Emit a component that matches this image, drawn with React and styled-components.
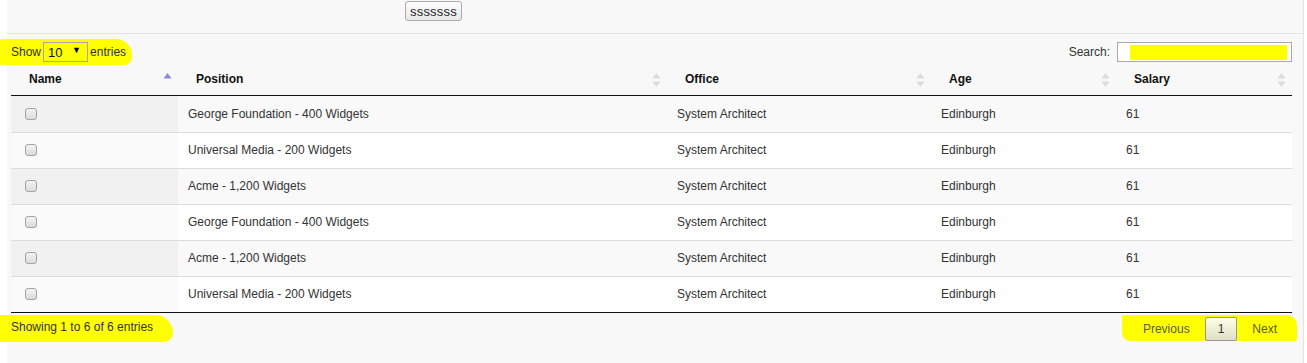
import React from "react";
import styled, { createGlobalStyle } from "styled-components";

const Global = createGlobalStyle`
  html, body { margin: 0; padding: 0; background: #ffffff; }
  body { font-family: "Liberation Sans", Arial, sans-serif; font-size: 12px; color: #333; }
  * { box-sizing: border-box; }
`;

const Page = styled.div`
  margin-left: 7px;
  width: 1297px;
  height: 363px;
  background: #f8f8f8;
  border-right: 1px solid #e3e3e3;
  overflow: visible;
`;

const TopBar = styled.div`
  height: 34px;
  padding: 1px 0 0 398px;
  border-bottom: 1px solid #e4e4e4;
`;

const TopButton = styled.button`
  height: 20px;
  padding: 0 4px;
  font-family: "Liberation Sans", Arial, sans-serif;
  font-size: 13px;
  letter-spacing: 0.2px;
  color: #222;
  background: linear-gradient(#fdfdfd, #e9e9e9);
  border: 1px solid #ababab;
  border-radius: 3px;
`;

const Wrapper = styled.div`
  padding: 0 11px 0 4px;
`;

const Controls = styled.div`
  height: 32px;
  display: flex;
  justify-content: space-between;
  align-items: flex-end;
  padding-bottom: 4px;
`;

const Marker = styled.div`
  display: flex;
  align-items: center;
  gap: ${(p) => p.$gap || 0}px;
  background: #ffff00;
  margin: ${(p) => p.$margin || "0"};
  padding: ${(p) => p.$pad || "0"};
  border-radius: ${(p) => p.$radius || "2px 14px 4px 10px"};
`;

const Label = styled.span`
  color: #333;
  line-height: 14px;
`;

const SelectWrap = styled.span`
  position: relative;
  display: inline-block;
`;

const Select = styled.select`
  appearance: none;
  width: 45px;
  height: 20px;
  padding: 0 0 0 4px;
  font-family: "Liberation Sans", Arial, sans-serif;
  font-size: 13px;
  color: #111;
  background: transparent;
  border: 1px solid #a9a9a9;
  border-radius: 0;
`;

const Arrow = styled.span`
  position: absolute;
  right: 7px;
  top: 3px;
  font-size: 9px;
  color: #000;
  pointer-events: none;
`;

const SearchBox = styled.label`
  display: flex;
  align-items: center;
  gap: 7px;
  color: #333;
`;

const SearchInput = styled.input`
  width: 175px;
  height: 20px;
  border: 1px solid #a9a9a9;
  background: linear-gradient(#ffff00, #ffff00) no-repeat 12px 2px / 157px 15px, #fff;
`;

const Table = styled.table`
  width: 1281px;
  border-collapse: separate;
  border-spacing: 0;
  table-layout: fixed;
  border-bottom: 1px solid #111;
`;

const Th = styled.th`
  height: 30px;
  padding: 6px 6px 0 18px;
  vertical-align: top;
  text-align: left;
  font-weight: bold;
  font-size: 12px;
  color: #111;
  border-bottom: 1px solid #111;
`;

const ThInner = styled.div`
  display: flex;
  justify-content: space-between;
  align-items: flex-start;
  line-height: 14px;
`;

const Td = styled.td`
  height: 36px;
  padding: 0 10px 1px;
  vertical-align: middle;
  color: #333;
  font-size: 12px;
  border-top: ${(p) => (p.$first ? "none" : "1px solid #dddddd")};
  background: ${(p) =>
    p.$sorted
      ? p.$odd
        ? "#f1f1f1"
        : "#fafafa"
      : p.$odd
      ? "#f9f9f9"
      : "#ffffff"};
`;

const Check = styled.input`
  appearance: none;
  display: block;
  width: 12px;
  height: 12px;
  margin: 0 0 0 4px;
  border: 1px solid #a3a3a3;
  border-radius: 3px;
  background: linear-gradient(#f3f3f3, #dadada);
`;

const Footer = styled.div`
  display: flex;
  justify-content: space-between;
  align-items: flex-start;
  padding-top: 2px;
`;

const Pager = styled.div`
  display: flex;
  align-items: center;
`;

const PageBtn = styled.span`
  display: inline-block;
  margin-left: 2px;
  padding: 4px 12px;
  line-height: 14px;
  font-size: 12px;
  color: ${(p) => (p.$current ? "#333" : "#5c5c30")};
  border: 1px solid ${(p) => (p.$current ? "#979797" : "transparent")};
  border-radius: 2px;
  background: ${(p) =>
    p.$current ? "linear-gradient(rgba(255,255,255,0.9), rgba(220,220,220,0.9))" : "transparent"};
`;

function SortIcon({ dir }) {
  const up = dir === "asc" ? "#8a8ad6" : "#dcdcdc";
  const down = dir === "asc" ? "transparent" : "#dcdcdc";
  return (
    <svg width="9" height="16" viewBox="0 0 9 16" style={{ flex: "none" }}>
      <polygon points="4.5,1 8.5,6.5 0.5,6.5" fill={up} />
      <polygon points="0.5,9.5 8.5,9.5 4.5,15" fill={down} />
    </svg>
  );
}

const columns = [
  { label: "Name", width: 167, dir: "asc" },
  { label: "Position", width: 489 },
  { label: "Office", width: 264 },
  { label: "Age", width: 185 },
  { label: "Salary", width: 176 },
];

const rows = [
  "George Foundation - 400 Widgets",
  "Universal Media - 200 Widgets",
  "Acme - 1,200 Widgets",
  "George Foundation - 400 Widgets",
  "Acme - 1,200 Widgets",
  "Universal Media - 200 Widgets",
];

export default function App() {
  return (
    <>
      <Global />
      <Page>
        <TopBar>
          <TopButton>sssssss</TopButton>
        </TopBar>
        <Wrapper>
          <Controls>
            <Marker
              $margin="0 0 -3px -11px"
              $pad="3px 6px 3px 11px"
              $gap={2}
              $radius="3px 16px 8px 2px"
            >
              <Label>Show</Label>
              <SelectWrap>
                <Select defaultValue="10">
                  <option value="10">10</option>
                  <option value="25">25</option>
                  <option value="50">50</option>
                  <option value="100">100</option>
                </Select>
                <Arrow>▼</Arrow>
              </SelectWrap>
              <Label>entries</Label>
            </Marker>
            <SearchBox>
              Search:
              <SearchInput type="text" />
            </SearchBox>
          </Controls>
          <Table>
            <colgroup>
              {columns.map((c) => (
                <col key={c.label} style={{ width: c.width }} />
              ))}
            </colgroup>
            <thead>
              <tr>
                {columns.map((c) => (
                  <Th key={c.label}>
                    <ThInner>
                      <span>{c.label}</span>
                      <SortIcon dir={c.dir} />
                    </ThInner>
                  </Th>
                ))}
              </tr>
            </thead>
            <tbody>
              {rows.map((r, i) => {
                const odd = i % 2 === 0;
                const first = i === 0;
                return (
                  <tr key={i}>
                    <Td $sorted $odd={odd} $first={first}>
                      <Check type="checkbox" />
                    </Td>
                    <Td $odd={odd} $first={first}>{r}</Td>
                    <Td $odd={odd} $first={first}>System Architect</Td>
                    <Td $odd={odd} $first={first}>Edinburgh</Td>
                    <Td $odd={odd} $first={first}>61</Td>
                  </tr>
                );
              })}
            </tbody>
          </Table>
          <Footer>
            <Marker $margin="0 0 0 -11px" $pad="5px 20px 8px 11px" $radius="0 20px 10px 0">
              <Label>Showing 1 to 6 of 6 entries</Label>
            </Marker>
            <Marker $margin="0 -5px 0 0" $pad="2px 7px 0 6px" $radius="2px 10px 2px 8px">
              <Pager>
                <PageBtn>Previous</PageBtn>
                <PageBtn $current>1</PageBtn>
                <PageBtn>Next</PageBtn>
              </Pager>
            </Marker>
          </Footer>
        </Wrapper>
      </Page>
    </>
  );
}
